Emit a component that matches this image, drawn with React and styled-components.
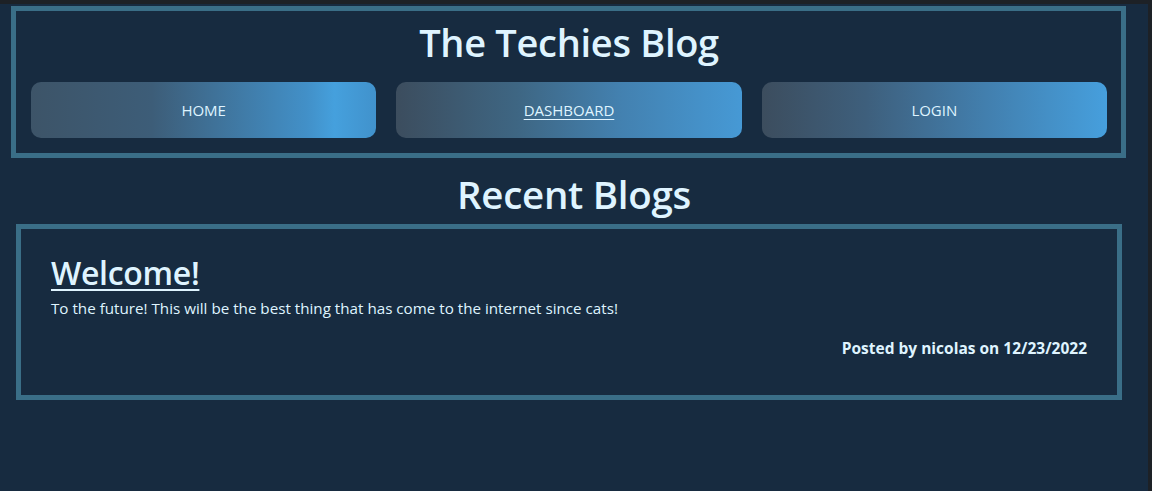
import styled, { createGlobalStyle } from "styled-components";

const GlobalStyle = createGlobalStyle`
  html {
    background: #1d2126;
  }
  body {
    margin: 0;
    border-top: 4px solid #1d2126;
    border-right: 4px solid #1d2126;
    min-height: 487px;
    background: #172b40;
    color: #dff4ff;
    font-family: "Open Sans", "Noto Sans", sans-serif;
  }
`;

const Page = styled.div`
  display: flex;
  flex-direction: column;
  padding: 2px 0 0 0;
`;

const Header = styled.header`
  margin: 0 22px 0 11px;
  border: 5px solid #3a6e87;
  padding: 11px 14px 15px 15px;
  display: flex;
  flex-direction: column;
  align-items: center;
`;

const Title = styled.h1`
  margin: 0;
  font-size: 38px;
  font-weight: 600;
  line-height: 40px;
  letter-spacing: -0.3px;
`;

const Nav = styled.nav`
  align-self: stretch;
  display: grid;
  grid-template-columns: repeat(3, 1fr);
  gap: 20px;
  margin-top: 20px;
`;

const NavButton = styled.a`
  height: 56px;
  border-radius: 10px;
  display: flex;
  align-items: center;
  justify-content: center;
  color: #dff4ff;
  font-size: 15px;
  text-transform: uppercase;
  text-decoration: ${(p) => (p.$active ? "underline" : "none")};
  text-underline-offset: 3px;
  background: ${(p) => p.$bg};
`;

const Heading = styled.h2`
  margin: 11px 0 5px;
  text-align: center;
  font-size: 38.5px;
  font-weight: 600;
  line-height: 50px;
  letter-spacing: -0.3px;
`;

const Card = styled.article`
  margin: 0 26px 0 16px;
  border: 5px solid #3a6e87;
  box-sizing: border-box;
  padding: 22px 30px 0 30px;
  height: 176px;
  display: flex;
  flex-direction: column;
`;

const PostTitle = styled.a`
  font-size: 32px;
  font-weight: 600;
  line-height: 44px;
  color: #dff4ff;
  text-decoration: underline;
  text-decoration-thickness: 2px;
  text-underline-offset: 4px;
  align-self: flex-start;
  letter-spacing: -0.3px;
`;

const PostBody = styled.p`
  margin: 3px 0 0;
  font-size: 15.2px;
  line-height: 20px;
`;

const Meta = styled.p`
  margin: 20px 0 0;
  text-align: right;
  font-size: 15.5px;
  font-weight: 700;
  line-height: 20px;
`;

const links = [
  {
    label: "Home",
    bg: "linear-gradient(90deg, #3d5468 0%, #3d5d78 35%, #4290c8 80%, #45a0dd 88%, #4192cc 100%)",
  },
  {
    label: "Dashboard",
    active: true,
    bg: "linear-gradient(90deg, #3c4d5e 0%, #3e6683 35%, #4381b0 65%, #4699d5 100%)",
  },
  {
    label: "Login",
    bg: "linear-gradient(90deg, #3c4d5e 0%, #3e5f7c 30%, #427fae 65%, #469fdd 100%)",
  },
];

export default function App() {
  return (
    <Page>
      <GlobalStyle />
      <Header>
        <Title>The Techies Blog</Title>
        <Nav>
          {links.map((l) => (
            <NavButton key={l.label} href="#" $bg={l.bg} $active={l.active}>
              {l.label}
            </NavButton>
          ))}
        </Nav>
      </Header>
      <Heading>Recent Blogs</Heading>
      <Card>
        <PostTitle href="#">Welcome!</PostTitle>
        <PostBody>
          To the future! This will be the best thing that has come to the internet since cats!
        </PostBody>
        <Meta>Posted by nicolas on 12/23/2022</Meta>
      </Card>
    </Page>
  );
}
